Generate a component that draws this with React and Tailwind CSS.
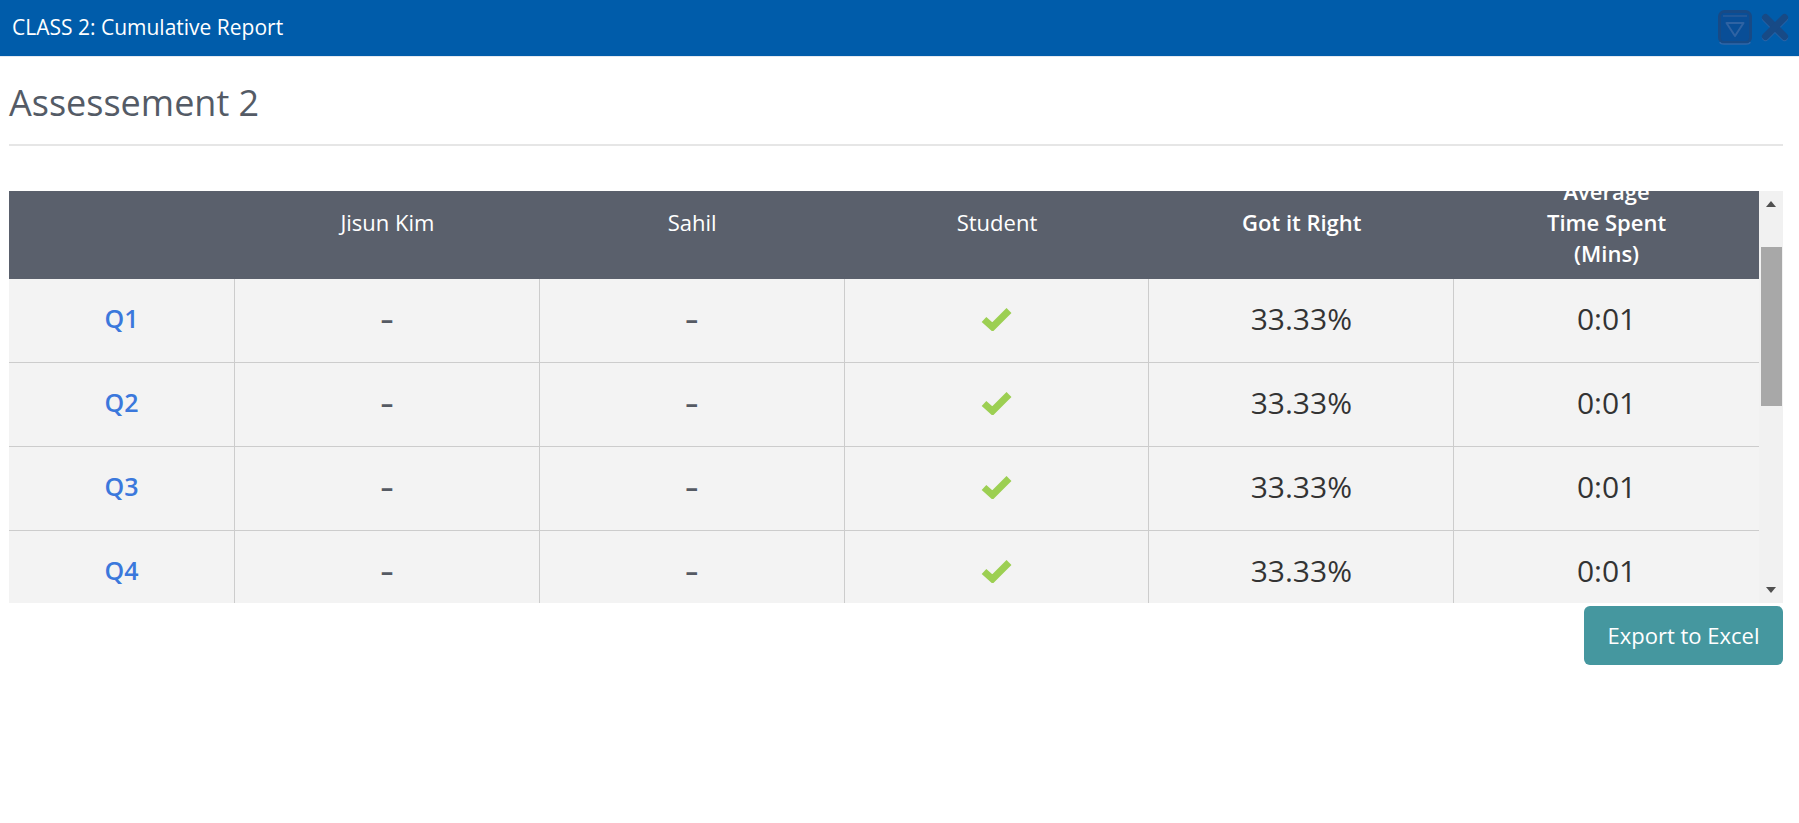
import React from "react";

const font = { fontFamily: '"Open Sans", "Liberation Sans", sans-serif' };

const rows = [
  { q: "Q1", a: "–", b: "–", right: "33.33%", time: "0:01" },
  { q: "Q2", a: "–", b: "–", right: "33.33%", time: "0:01" },
  { q: "Q3", a: "–", b: "–", right: "33.33%", time: "0:01" },
  { q: "Q4", a: "–", b: "–", right: "33.33%", time: "0:01" },
];

const CheckMark = () => (
  <svg width="31" height="25" viewBox="0 0 31 25">
    <path d="M3 13.5 L11.5 21 L28 4.5" fill="none" stroke="#9ccf52" strokeWidth="7" />
  </svg>
);

const MinimizeIcon = () => (
  <svg width="34" height="35" viewBox="0 0 34 35">
    <rect x="1.5" y="1.5" width="31" height="31" rx="5" fill="#094e97" stroke="#174a86" strokeWidth="3" />
    <path d="M2 32 Q2 34 6 34 L28 34 Q32 34 32 32" fill="none" stroke="#2f66a8" strokeWidth="1.5" />
    <line x1="5" y1="6" x2="29" y2="6" stroke="#2a5d9a" strokeWidth="1.5" />
    <path d="M8.5 13 L25.5 13 L17 26 Z" fill="none" stroke="#2f63a3" strokeWidth="2" strokeLinejoin="round" />
  </svg>
);

const CloseIcon = () => (
  <svg width="28" height="29" viewBox="0 0 28 29">
    <g stroke="#2d64a6" strokeWidth="7" strokeLinecap="round">
      <line x1="4.5" y1="5.5" x2="23.5" y2="24.5" />
      <line x1="23.5" y1="5.5" x2="4.5" y2="24.5" />
    </g>
    <g stroke="#174a86" strokeWidth="7" strokeLinecap="round">
      <line x1="4.5" y1="4.5" x2="23.5" y2="23.5" />
      <line x1="23.5" y1="4.5" x2="4.5" y2="23.5" />
    </g>
  </svg>
);

const HeaderCell = ({ children, bold }) => (
  <div
    className={`flex h-[88px] items-center justify-center pb-[26px] text-center text-[22px] leading-[31px] text-white ${
      bold ? "font-semibold" : "font-normal"
    }`}
  >
    <div>{children}</div>
  </div>
);

const BodyCell = ({ children, last, className = "" }) => (
  <div
    className={`flex h-[84px] items-center justify-center border-b border-[#cccccc] pb-[4px] ${
      last ? "" : "border-r"
    } ${className}`}
  >
    {children}
  </div>
);

export default function App() {
  return (
    <div className="min-h-[823px] w-full bg-white" style={font}>
      {/* Title bar */}
      <div className="flex h-[57px] items-center justify-between border-b border-[#e3e9f1] bg-[#005caa] pl-[12px] pr-[10px]">
        <span className="text-[21px] text-white">CLASS 2: Cumulative Report</span>
        <div className="flex items-center gap-[9px] pb-[2px]">
          <MinimizeIcon />
          <CloseIcon />
        </div>
      </div>

      <div className="pl-[9px] pr-[16px]">
        <h1 className="mt-[24px] text-[36px] font-normal leading-[43px] text-[#545b66]">Assessement 2</h1>
        <div className="mt-[20px] h-[2px] bg-[#e6e6e6]" />

        {/* Table with scrollbar */}
        <div className="mt-[45px] flex h-[412px] overflow-hidden">
          <div className="flex-1 overflow-hidden">
            <div className="grid grid-cols-[226px_repeat(5,1fr)] bg-[#5a606c]">
              <HeaderCell />
              <HeaderCell>Jisun Kim</HeaderCell>
              <HeaderCell>Sahil</HeaderCell>
              <HeaderCell>Student</HeaderCell>
              <HeaderCell bold>Got it Right</HeaderCell>
              <HeaderCell bold>
                Average
                <br />
                Time Spent
                <br />
                (Mins)
              </HeaderCell>
            </div>
            <div className="grid grid-cols-[226px_repeat(5,1fr)] bg-[#f3f3f3]">
              {rows.map((r) => (
                <React.Fragment key={r.q}>
                  <BodyCell className="text-[25px] font-semibold text-[#3b78dc]">{r.q}</BodyCell>
                  <BodyCell className="text-[25px] font-bold text-[#555a63]">{r.a}</BodyCell>
                  <BodyCell className="text-[25px] font-bold text-[#555a63]">{r.b}</BodyCell>
                  <BodyCell>
                    <CheckMark />
                  </BodyCell>
                  <BodyCell className="text-[30px] text-[#333333]">{r.right}</BodyCell>
                  <BodyCell last className="text-[30px] text-[#333333]">
                    {r.time}
                  </BodyCell>
                </React.Fragment>
              ))}
            </div>
          </div>

          {/* Scrollbar */}
          <div className="flex w-[24px] flex-col items-center bg-[#f1f1f1]">
            <div className="flex h-[24px] w-full items-center justify-center pt-[2px]">
              <svg width="10" height="6" viewBox="0 0 10 6">
                <path d="M0 6 L5 0 L10 6 Z" fill="#505050" />
              </svg>
            </div>
            <div className="mt-[32px] h-[159px] w-[21px] bg-[#a8a8a8]" />
            <div className="flex-1" />
            <div className="flex h-[24px] w-full items-center justify-center pb-[2px]">
              <svg width="10" height="6" viewBox="0 0 10 6">
                <path d="M0 0 L10 0 L5 6 Z" fill="#505050" />
              </svg>
            </div>
          </div>
        </div>

        <div className="mt-[3px] flex justify-end">
          <button className="h-[59px] w-[199px] rounded-[6px] bg-[#45979f] text-[22px] text-white">
            Export to Excel
          </button>
        </div>
      </div>
    </div>
  );
}
